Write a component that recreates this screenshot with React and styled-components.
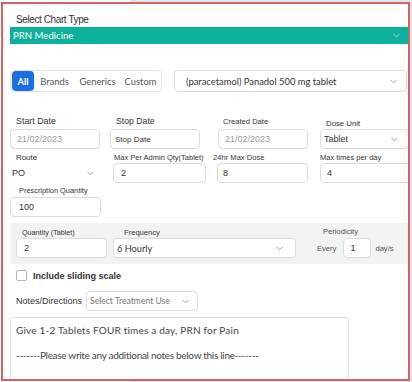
import React from "react"
import styled, { createGlobalStyle } from "styled-components"
import { ChevronDown } from "lucide-react"

const UI_FONT = "Lato, \"Open Sans\", sans-serif"

const GlobalStyle = createGlobalStyle`
    html, body {
        margin: 0;
        padding: 0;
        background: linear-gradient(to right, #fff 130px, #d9e7f5 130px);
    }
    body {
        font-family: "Liberation Sans", Arial, sans-serif;
        color: #333;
    }
`

const Frame = styled.div`
    box-sizing: border-box;
    margin: 2px 0 0 1px;
    width: 409px;
    height: 379px;
    border: 2px solid #d9625f;
    background: #fff;
    overflow: hidden;
    padding: 10px 0 0 7px;
`

const Title = styled.div`
    font-size: 10px;
    line-height: 12px;
    letter-spacing: -0.4px;
    padding-left: 6px;
`

const ChartBar = styled.div`
    display: flex;
    align-items: center;
    justify-content: space-between;
    margin-top: 1px;
    height: 17px;
    background: #0db09a;
    color: #fff;
    font-family: ${UI_FONT};
    font-size: 9.6px;
    padding: 0 6px 0 3px;
`

const TopRow = styled.div`
    display: flex;
    align-items: center;
    margin-top: 26px;
    gap: 12px;
`

const Tabs = styled.div`
    display: flex;
    align-items: center;
    box-sizing: border-box;
    height: 22px;
    width: 152px;
    padding-left: 1px;
    border: 1px solid #e4e4e4;
    border-radius: 4px;
    font-family: ${UI_FONT};
    font-size: 9.4px;
    color: #555;
`

const Tab = styled.div`
    height: 20px;
    display: flex;
    align-items: center;
    justify-content: center;
    width: ${p => p.$w}px;
    background: ${p => p.$active ? "#1a6fe2" : "transparent"};
    color: ${p => p.$active ? "#fff" : "#555"};
    font-weight: ${p => p.$active ? 700 : 400};
    border-radius: 4px;
`

const Select = styled.div`
    box-sizing: border-box;
    display: flex;
    align-items: center;
    justify-content: space-between;
    width: ${p => p.$w}px;
    height: ${p => p.$h || 20}px;
    border: 1px solid ${p => p.$borderless ? "transparent" : "#dcdcdc"};
    border-radius: 4px;
    padding: 0 ${p => p.$pr || 6}px 0 ${p => p.$pl || 4}px;
    font-family: ${p => p.$ui ? UI_FONT : "\"Liberation Sans\", Arial, sans-serif"};
    font-size: ${p => p.$fs || 9}px;
    color: ${p => p.$muted ? "#777" : "#333"};
    background: #fff;
    white-space: nowrap;
`

const Input = styled.div`
    box-sizing: border-box;
    display: flex;
    align-items: center;
    width: ${p => p.$w}px;
    height: 20px;
    border: 1px solid #dcdcdc;
    border-radius: 4px;
    padding-left: ${p => p.$pl || 7}px;
    font-size: ${p => p.$fs || 9}px;
    color: ${p => p.$muted ? "#9a9a9a" : "#333"};
    background: #fff;
`

const FieldRow = styled.div`
    display: flex;
    align-items: flex-end;
    margin-top: ${p => p.$mt}px;
`

const Field = styled.div`
    display: flex;
    flex-direction: column;
    width: ${p => p.$w}px;
    flex-shrink: 0;
`

const Label = styled.div`
    font-size: ${p => p.$fs || 7.6}px;
    line-height: ${p => p.$lh || 9}px;
    margin-left: ${p => p.$ml || 0}px;
    margin-bottom: ${p => p.$mb || 1}px;
    color: #333;
    white-space: nowrap;
`

const Panel = styled.div`
    display: flex;
    align-items: flex-end;
    margin-top: 6px;
    height: 41px;
    box-sizing: border-box;
    background: #f1f2f2;
    padding: 0 0 6px 6px;
`

const Periodicity = styled.div`
    display: flex;
    flex-direction: column;
    margin-left: 21px;
    font-size: 7.6px;
    color: #555;
`

const PeriodLabel = styled.span`
    padding-left: 6px;
    line-height: 9px;
    margin-bottom: 2px;
`

const PeriodRow = styled.div`
    display: flex;
    align-items: center;
`

const SmallBox = styled.div`
    box-sizing: border-box;
    width: 28px;
    height: 20px;
    margin: 0 4px 0 7px;
    border: 1px solid #dcdcdc;
    border-radius: 4px;
    background: #fff;
    display: flex;
    align-items: center;
    padding-left: 6px;
    font-size: 9px;
    color: #333;
`

const CheckRow = styled.label`
    display: flex;
    align-items: center;
    gap: 6px;
    margin: 6px 0 0 6px;
    font-size: 9px;
    font-weight: 700;
    color: #333;
`

const Box = styled.span`
    box-sizing: border-box;
    width: 11px;
    height: 11px;
    border: 1px solid #b5b5b5;
    border-radius: 2px;
    background: #fff;
`

const NotesRow = styled.div`
    display: flex;
    align-items: center;
    margin-top: 10px;
    gap: 4px;
`

const NotesLabel = styled.span`
    font-size: 9px;
    color: #333;
    padding-left: 6px;
`

const TextArea = styled.div`
    box-sizing: border-box;
    width: 339px;
    height: 80px;
    margin-top: 6px;
    border: 1px solid #e0e0e0;
    border-radius: 3px;
    padding: 6px 5px;
    font-family: ${UI_FONT};
    font-size: 10px;
    line-height: 12.5px;
    color: #444;
`

const NoteLine = styled.p`
    margin: 0 0 12.5px 0;
    letter-spacing: ${p => p.$ls}px;
    white-space: nowrap;
`

const Chevron = ({ color = "#777" }) => <ChevronDown size={11} strokeWidth={1.4} color={color} />

const App = () => {
    return (
        <>
            <GlobalStyle />
            <Frame>
                <Title>Select Chart Type</Title>
                <ChartBar>
                    <span>PRN Medicine</span>
                    <Chevron color="#e8fff9" />
                </ChartBar>

                <TopRow>
                    <Tabs>
                        <Tab $w={22} $active>All</Tab>
                        <Tab $w={41}>Brands</Tab>
                        <Tab $w={45}>Generics</Tab>
                        <Tab $w={41}>Custom</Tab>
                    </Tabs>
                    <Select $w={233} $h={22} $ui $fs={9.4} $pl={11} $pr={7}>
                        <span>(paracetamol) Panadol 500 mg tablet</span>
                        <Chevron />
                    </Select>
                </TopRow>

                <FieldRow $mt={24}>
                    <Field $w={100}>
                        <Label $fs={8.9} $lh={11} $ml={6} $mb={2}>Start Date</Label>
                        <Input $w={90} $muted $pl={6}>21/02/2023</Input>
                    </Field>
                    <Field $w={108}>
                        <Label $fs={8.7} $lh={11} $ml={6} $mb={2}>Stop Date</Label>
                        <Input $w={90} $pl={4} $fs={8}>Stop Date</Input>
                    </Field>
                    <Field $w={102}>
                        <Label $ml={5} $mb={3}>Created Date</Label>
                        <Input $w={90} $muted $pl={6}>21/02/2023</Input>
                    </Field>
                    <Field $w={90}>
                        <Label $fs={7.8} $ml={6} $mb={1}>Dose Unit</Label>
                        <Select $w={89} $pl={3} $pr={8}>
                            <span>Tablet</span>
                            <Chevron />
                        </Select>
                    </Field>
                </FieldRow>

                <FieldRow $mt={4}>
                    <Field $w={103}>
                        <Label $fs={7.9} $ml={6} $mb={1}>Route</Label>
                        <Select $w={92} $pl={1} $pr={5} $borderless>
                            <span>PO</span>
                            <Chevron />
                        </Select>
                    </Field>
                    <Field $w={104}>
                        <Label $fs={7.5} $ml={1} $mb={1}>Max Per Admin Qty(Tablet)</Label>
                        <Input $w={93}>2</Input>
                    </Field>
                    <Field $w={103}>
                        <Label $ml={-4} $mb={1}>24hr Max Dose</Label>
                        <Input $w={91} $pl={5}>8</Input>
                    </Field>
                    <Field $w={90}>
                        <Label $fs={7.5} $mb={1}>Max times per day</Label>
                        <Input $w={92} $pl={6}>4</Input>
                    </Field>
                </FieldRow>

                <FieldRow $mt={3}>
                    <Field $w={101}>
                        <Label $fs={7.4} $ml={9} $mb={2}>Prescription Quantity</Label>
                        <Input $w={91} $pl={8}>100</Input>
                    </Field>
                </FieldRow>

                <Panel>
                    <Field $w={97}>
                        <Label $fs={7.2} $ml={6} $mb={1}>Quantity (Tablet)</Label>
                        <Input $w={91} $pl={7}>2</Input>
                    </Field>
                    <Field $w={183}>
                        <Label $fs={7.6} $ml={11} $mb={0}>Frequency</Label>
                        <Select $w={183} $pl={3} $pr={10} $ui $fs={9.2}>
                            <span>6 Hourly</span>
                            <Chevron />
                        </Select>
                    </Field>
                    <Periodicity>
                        <PeriodLabel>Periodicity</PeriodLabel>
                        <PeriodRow>
                            <span>Every</span>
                            <SmallBox>1</SmallBox>
                            <span>day/s</span>
                        </PeriodRow>
                    </Periodicity>
                </Panel>

                <CheckRow>
                    <Box />
                    <span>Include sliding scale</span>
                </CheckRow>

                <NotesRow>
                    <NotesLabel>Notes/Directions</NotesLabel>
                    <Select $w={112} $pl={3} $pr={6} $ui $fs={8.6} $muted>
                        <span>Select Treatment Use</span>
                        <Chevron />
                    </Select>
                </NotesRow>

                <TextArea>
                    <NoteLine $ls={0.2}>Give 1-2 Tablets FOUR times a day, PRN for Pain</NoteLine>
                    <NoteLine $ls={-0.3}>-------Please write any additional notes below this line-------</NoteLine>
                </TextArea>
            </Frame>
        </>
    )
}

export default App
